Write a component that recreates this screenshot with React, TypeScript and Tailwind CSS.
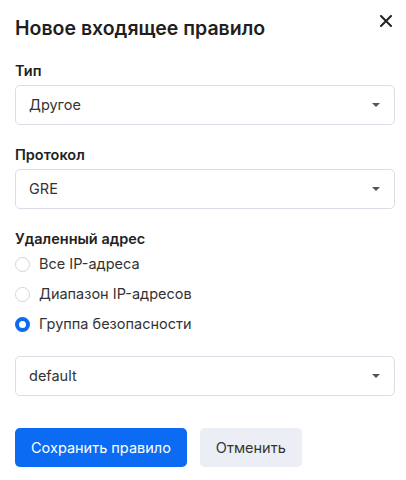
import { useState } from "react";

const REMOTE_OPTIONS = ["Все IP-адреса", "Диапазон IP-адресов", "Группа безопасности"];

function Caret() {
  return (
    <svg width="8" height="4" viewBox="0 0 8 4" className="shrink-0">
      <path d="M0 0h8L4 4z" fill="#555" />
    </svg>
  );
}

function SelectBox({ value }: { value: string }) {
  return (
    <div className="flex h-[40px] items-center justify-between rounded-[5px] border border-[#dcdce6] bg-white pl-[13px] pr-[14px] text-[14.5px] text-[#333]">
      <span>{value}</span>
      <Caret />
    </div>
  );
}

function Label({ children }: { children: string }) {
  return <div className="mb-1 text-[14.5px] font-semibold leading-[20px] text-[#222]">{children}</div>;
}

export default function App() {
  const [remote, setRemote] = useState(2);

  return (
    <div className="w-[406px] h-[480px] bg-white pl-[15px] pr-[11px] pt-[14px] font-['Inter',sans-serif]">
      <header className="flex items-start justify-between">
        <h1 className="text-[19.5px] font-semibold leading-[28px] text-[#1f1f1f]">Новое входящее правило</h1>
        <button className="mt-[-1px] mr-[1px] flex h-[16px] w-[16px] items-center justify-center text-[#222]">
          <svg width="12" height="12" viewBox="0 0 12 12">
            <path d="M1 1l10 10M11 1L1 11" stroke="currentColor" strokeWidth="2" strokeLinecap="round" />
          </svg>
        </button>
      </header>

      <div className="mt-[19px]">
        <Label>Тип</Label>
        <SelectBox value="Другое" />
      </div>

      <div className="mt-[20px]">
        <Label>Протокол</Label>
        <SelectBox value="GRE" />
      </div>

      <div className="mt-[20px]">
        <div className="text-[14.5px] font-semibold leading-[20px] text-[#222]">Удаленный адрес</div>
        {REMOTE_OPTIONS.map((opt, i) => (
          <label key={opt} className="flex h-[30px] items-center gap-[9px] text-[14.5px] text-[#333]" onClick={() => setRemote(i)}>
            {remote === i ? (
              <span className="h-[15px] w-[15px] rounded-full border-[4px] border-[#0b6bf2] bg-white" />
            ) : (
              <span className="h-[15px] w-[15px] rounded-full border border-[#d4d4de] bg-white" />
            )}
            <span>{opt}</span>
          </label>
        ))}
      </div>

      <div className="mt-[17px]">
        <SelectBox value="default" />
      </div>

      <div className="mt-[32px] flex gap-[13px]">
        <button className="h-[39px] rounded-[5px] bg-[#0b6bf2] px-[16px] text-[14.5px] text-white">Сохранить правило</button>
        <button className="h-[39px] rounded-[5px] bg-[#ebeef5] px-[16px] text-[14.5px] text-[#333]">Отменить</button>
      </div>
    </div>
  );
}
